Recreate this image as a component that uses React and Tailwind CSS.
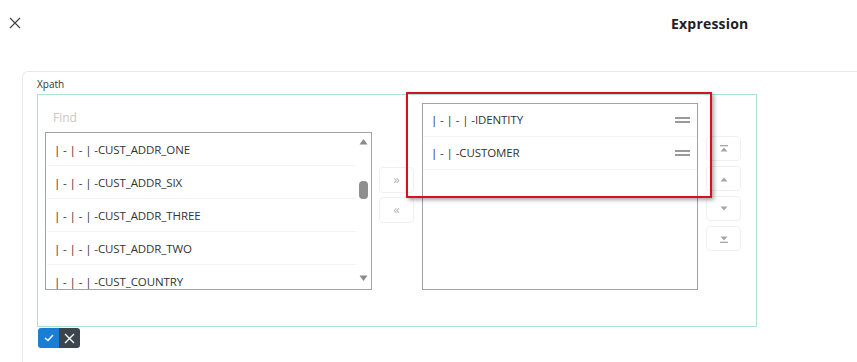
import React from 'react';

const leftItems = [
  '| - | - | -CUST_ADDR_ONE',
  '| - | - | -CUST_ADDR_SIX',
  '| - | - | -CUST_ADDR_THREE',
  '| - | - | -CUST_ADDR_TWO',
  '| - | - | -CUST_COUNTRY',
];

const rightItems = ['| - | - | -IDENTITY', '| - | -CUSTOMER'];

function Tri({ dir = 'up', bar }) {
  return (
    <svg width="10" height="10" viewBox="0 0 10 10">
      {dir === 'up' ? (
        <>
          {bar === 'top' && <rect x="1" y="1" width="8" height="1.3" fill="#a5a5a5" />}
          <path d="M1.5 7.5 L5 3.5 L8.5 7.5 Z" fill="#a5a5a5" />
        </>
      ) : (
        <>
          <path d="M1.5 2.5 L5 6.5 L8.5 2.5 Z" fill="#a5a5a5" />
          {bar === 'bottom' && <rect x="1" y="7.7" width="8" height="1.3" fill="#a5a5a5" />}
        </>
      )}
    </svg>
  );
}

function SideButton({ children, className = '' }) {
  return (
    <button className={`w-[35px] flex items-center justify-center rounded border border-[#f0f0f0] bg-white text-[#b5b5b5] ${className}`}>
      {children}
    </button>
  );
}

export default function App() {
  return (
    <div
      className="relative w-[857px] h-[362px] bg-white overflow-hidden text-[#333]"
      style={{ fontFamily: '"Open Sans", "Liberation Sans", sans-serif' }}
    >
      {/* Header */}
      <div className="flex items-center h-[46px]">
        <svg className="ml-[9px]" width="12" height="12" viewBox="0 0 12 12">
          <path d="M1 1 L11 11 M11 1 L1 11" stroke="#444" strokeWidth="1.2" />
        </svg>
        <div className="ml-[650px] text-[14px] font-bold text-[#222] tracking-[0.2px]">Expression</div>
      </div>

      {/* Card */}
      <div className="mt-[25px] ml-[22px] h-[300px] border-t border-l border-[#e8e8e8] rounded-tl-md pt-[5px] pl-[14px]">
        <div className="text-[10px] leading-[14px] text-[#333]">Xpath</div>

        <div className="mt-[3px] w-[720px] h-[233px] border border-[#ace3d3] pt-[8px] pl-[7px] flex items-start">
          {/* Left column */}
          <div className="w-[327px]">
            <div className="h-[29px] leading-[29px] pl-[8px] text-[12px] text-[#c8c8c8]">Find</div>
            <div className="h-[158px] border border-[#a3a3a3] flex overflow-hidden">
              <div className="flex-1 pl-[1px]">
                {leftItems.map((t) => (
                  <div key={t} className="h-[33px] flex items-center pl-[7px] pt-[1px] text-[11.5px] tracking-[-0.1px] border-b border-[#f4f4f4]">
                    {t}
                  </div>
                ))}
              </div>
              <div className="w-[15px] flex flex-col items-center pt-[5px] pb-[7px]">
                <svg width="9" height="7" viewBox="0 0 9 7"><path d="M0.5 6.5 L4.5 1 L8.5 6.5 Z" fill="#8a8a8a" /></svg>
                <div className="w-[9px] h-[18px] rounded-[4px] bg-[#8f8f8f] mt-[36px]" />
                <div className="flex-1" />
                <svg width="9" height="7" viewBox="0 0 9 7"><path d="M0.5 0.5 L4.5 6 L8.5 0.5 Z" fill="#8a8a8a" /></svg>
              </div>
            </div>
          </div>

          {/* Move buttons */}
          <div className="ml-[7px] mt-[64px] flex flex-col gap-[4px]">
            <SideButton className="h-[26px] text-[13px]">»</SideButton>
            <SideButton className="h-[26px] text-[13px]">«</SideButton>
          </div>

          {/* Right list */}
          <div className="ml-[8px] w-[276px] h-[187px] border border-[#a3a3a3]">
            {rightItems.map((t) => (
              <div key={t} className="h-[33px] flex items-center justify-between pl-[8px] pr-[7px] text-[11.5px] tracking-[-0.1px] border-b border-[#f4f4f4]">
                <span>{t}</span>
                <span className="flex flex-col gap-[2px]">
                  <span className="block w-[15px] h-[2px] bg-[#9a9a9a]" />
                  <span className="block w-[15px] h-[2px] bg-[#9a9a9a]" />
                </span>
              </div>
            ))}
          </div>

          {/* Order buttons */}
          <div className="ml-[8px] mt-[33px] flex flex-col gap-[5px]">
            <SideButton className="h-[25px]"><Tri dir="up" bar="top" /></SideButton>
            <SideButton className="h-[25px]"><Tri dir="up" /></SideButton>
            <SideButton className="h-[25px]"><Tri dir="down" /></SideButton>
            <SideButton className="h-[25px]"><Tri dir="down" bar="bottom" /></SideButton>
          </div>
        </div>

        {/* Confirm buttons */}
        <div className="mt-[1px] ml-[1px] flex">
          <button className="w-[21px] h-[20px] bg-[#1a7fd4] rounded-l-[3px] flex items-center justify-center">
            <svg width="10" height="8" viewBox="0 0 10 8"><path d="M1 4 L4 6.5 L9 1" stroke="#fff" strokeWidth="1.4" fill="none" /></svg>
          </button>
          <button className="w-[21px] h-[20px] bg-[#3c454d] rounded-r-[3px] flex items-center justify-center">
            <svg width="11" height="11" viewBox="0 0 11 11"><path d="M1 1 L10 10 M10 1 L1 10" stroke="#fff" strokeWidth="1.3" /></svg>
          </button>
        </div>
      </div>

      {/* Red annotation */}
      <div className="absolute left-[406px] top-[92px] w-[306px] h-[106px] border-2 border-[#d3141c] shadow-[2px_2px_4px_rgba(0,0,0,0.35)]" />
    </div>
  );
}
